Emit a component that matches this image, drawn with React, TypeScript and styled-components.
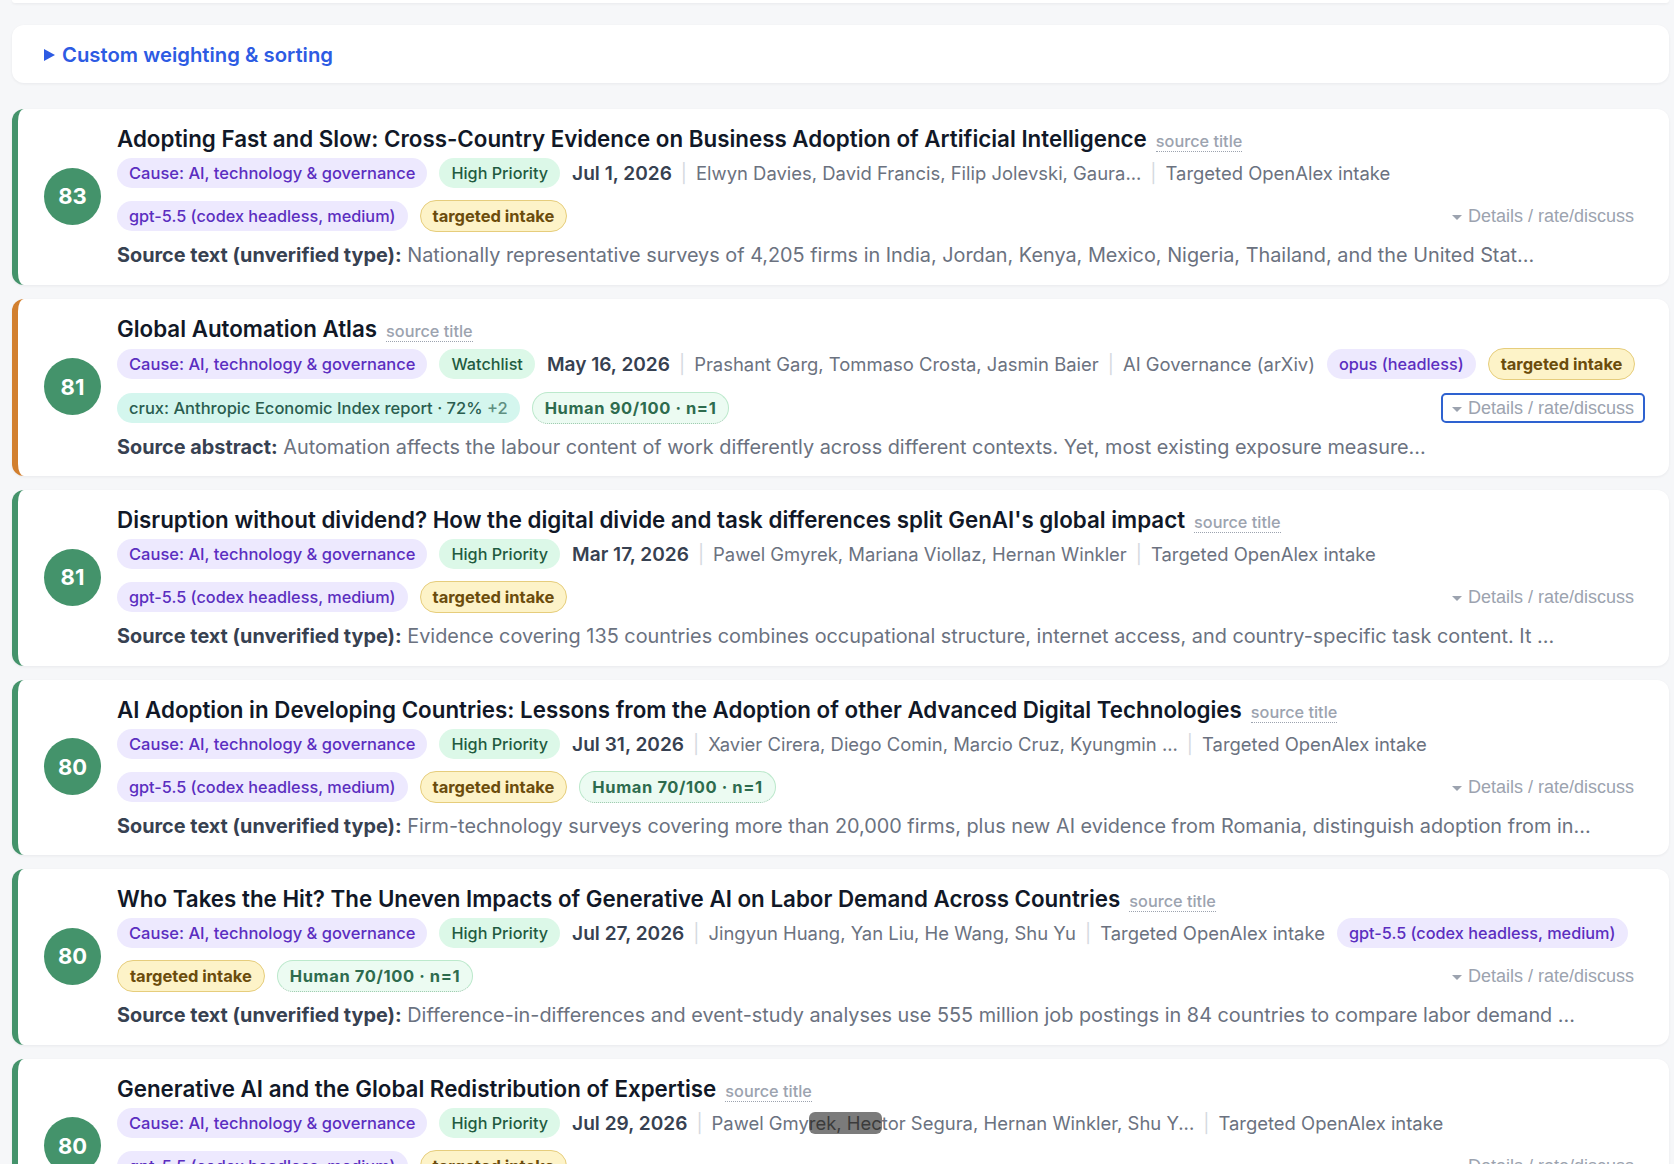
import React from 'react'
import styled, { createGlobalStyle, css } from 'styled-components'

type TagKind = 'cause' | 'priority' | 'model' | 'intake' | 'crux' | 'human'

type Tag = {
  kind: TagKind
  label: string
  extra?: string
}

type Paper = {
  score: number
  accent: string
  title: string
  lead: Tag[]
  date: string
  authors: React.ReactNode
  source: string
  trail: Tag[]
  bodyLabel: string
  body: string
  focused?: boolean
}

const GREEN = '#44936b'
const ORANGE = '#d27f2e'

// the grey cursor smear over one author line in the screenshot
const Smudge = styled.span`
  background: rgba(72, 72, 72, 0.72);
  color: #3b3b3b;
  border-radius: 6px;
`

const cause: Tag = { kind: 'cause', label: 'Cause: AI, technology & governance' }
const highPriority: Tag = { kind: 'priority', label: 'High Priority' }
const gpt: Tag = { kind: 'model', label: 'gpt-5.5 (codex headless, medium)' }
const intake: Tag = { kind: 'intake', label: 'targeted intake' }
const human70: Tag = { kind: 'human', label: 'Human 70/100 · n=1' }

const papers: Paper[] = [
  {
    score: 83,
    accent: GREEN,
    title:
      'Adopting Fast and Slow: Cross-Country Evidence on Business Adoption of Artificial Intelligence',
    lead: [cause, highPriority],
    date: 'Jul 1, 2026',
    authors: 'Elwyn Davies, David Francis, Filip Jolevski, Gaura...',
    source: 'Targeted OpenAlex intake',
    trail: [gpt, intake],
    bodyLabel: 'Source text (unverified type):',
    body: 'Nationally representative surveys of 4,205 firms in India, Jordan, Kenya, Mexico, Nigeria, Thailand, and the United Stat...',
  },
  {
    score: 81,
    accent: ORANGE,
    title: 'Global Automation Atlas',
    lead: [cause, { kind: 'priority', label: 'Watchlist' }],
    date: 'May 16, 2026',
    authors: 'Prashant Garg, Tommaso Crosta, Jasmin Baier',
    source: 'AI Governance (arXiv)',
    trail: [
      { kind: 'model', label: 'opus (headless)' },
      intake,
      { kind: 'crux', label: 'crux: Anthropic Economic Index report · 72%', extra: '+2' },
      { kind: 'human', label: 'Human 90/100 · n=1' },
    ],
    bodyLabel: 'Source abstract:',
    body: 'Automation affects the labour content of work differently across different contexts. Yet, most existing exposure measure...',
    focused: true,
  },
  {
    score: 81,
    accent: GREEN,
    title:
      "Disruption without dividend? How the digital divide and task differences split GenAI's global impact",
    lead: [cause, highPriority],
    date: 'Mar 17, 2026',
    authors: 'Pawel Gmyrek, Mariana Viollaz, Hernan Winkler',
    source: 'Targeted OpenAlex intake',
    trail: [gpt, intake],
    bodyLabel: 'Source text (unverified type):',
    body: 'Evidence covering 135 countries combines occupational structure, internet access, and country-specific task content. It ...',
  },
  {
    score: 80,
    accent: GREEN,
    title:
      'AI Adoption in Developing Countries: Lessons from the Adoption of other Advanced Digital Technologies',
    lead: [cause, highPriority],
    date: 'Jul 31, 2026',
    authors: 'Xavier Cirera, Diego Comin, Marcio Cruz, Kyungmin ...',
    source: 'Targeted OpenAlex intake',
    trail: [gpt, intake, human70],
    bodyLabel: 'Source text (unverified type):',
    body: 'Firm-technology surveys covering more than 20,000 firms, plus new AI evidence from Romania, distinguish adoption from in...',
  },
  {
    score: 80,
    accent: GREEN,
    title:
      'Who Takes the Hit? The Uneven Impacts of Generative AI on Labor Demand Across Countries',
    lead: [cause, highPriority],
    date: 'Jul 27, 2026',
    authors: 'Jingyun Huang, Yan Liu, He Wang, Shu Yu',
    source: 'Targeted OpenAlex intake',
    trail: [gpt, intake, human70],
    bodyLabel: 'Source text (unverified type):',
    body: 'Difference-in-differences and event-study analyses use 555 million job postings in 84 countries to compare labor demand ...',
  },
  {
    score: 80,
    accent: GREEN,
    title: 'Generative AI and the Global Redistribution of Expertise',
    lead: [cause, highPriority],
    date: 'Jul 29, 2026',
    authors: (
      <>
        Pawel Gmy<Smudge>rek, Hec</Smudge>tor Segura, Hernan Winkler, Shu Y...
      </>
    ),
    source: 'Targeted OpenAlex intake',
    trail: [gpt, intake],
    bodyLabel: 'Source text (unverified type):',
    body: 'Large-scale evidence on how generative AI shifts the geography of expert work across countries and occupations...',
  },
]

function TagPill({ tag }: { tag: Tag }) {
  return (
    <Pill $kind={tag.kind}>
      {tag.label}
      {tag.extra ? <PillExtra> {tag.extra}</PillExtra> : null}
    </Pill>
  )
}

function PaperCard({ paper }: { paper: Paper }) {
  return (
    <Card $accent={paper.accent}>
      <Score>{paper.score}</Score>
      <Content>
        <TitleRow>
          <Title>{paper.title}</Title>
          <SourceTitle>source title</SourceTitle>
        </TitleRow>
        <Meta>
          {paper.lead.map((tag, i) => (
            <TagPill key={`l${i}`} tag={tag} />
          ))}
          <DateText>{paper.date}</DateText>
          <Sep>|</Sep>
          <MetaText>{paper.authors}</MetaText>
          <Sep>|</Sep>
          <MetaText>{paper.source}</MetaText>
          {paper.trail.map((tag, i) => (
            <TagPill key={`t${i}`} tag={tag} />
          ))}
          <DetailsToggle $focused={!!paper.focused}>
            <Caret />
            Details / rate/discuss
          </DetailsToggle>
        </Meta>
        <Body>
          <BodyLabel>{paper.bodyLabel}</BodyLabel> {paper.body}
        </Body>
      </Content>
    </Card>
  )
}

export default function App() {
  return (
    <>
      <GlobalStyle />
      <Page>
        <TopEdge />
        <Controls>
          <ControlsCaret />
          <ControlsLabel>Custom weighting &amp; sorting</ControlsLabel>
        </Controls>
        <List>
          {papers.map((p, i) => (
            <PaperCard key={i} paper={p} />
          ))}
        </List>
      </Page>
    </>
  )
}

// Styles

const GlobalStyle = createGlobalStyle`
  html, body {
    margin: 0;
    padding: 0;
    background: #f6f7f9;
    overflow: hidden;
  }
  body {
    font-family: Inter, "Noto Sans", sans-serif;
    -webkit-font-smoothing: antialiased;
  }
  * {
    box-sizing: border-box;
  }
`

const Page = styled.div`
  display: flex;
  flex-direction: column;
  padding: 0 5px 0 12px;
`

const TopEdge = styled.div`
  flex-shrink: 0;
  height: 3px;
  background: #fff;
  border-radius: 0 0 12px 12px;
  box-shadow: 0 1px 3px rgba(15, 23, 42, 0.06);
`

const Controls = styled.div`
  flex-shrink: 0;
  display: flex;
  align-items: center;
  gap: 7px;
  height: 58px;
  margin-top: 22px;
  padding: 0 32px;
  background: #fff;
  border-radius: 12px;
  box-shadow: 0 1px 3px rgba(15, 23, 42, 0.06);
`

const ControlsCaret = styled.span`
  width: 0;
  height: 0;
  border-top: 6px solid transparent;
  border-bottom: 6px solid transparent;
  border-left: 11px solid #2d5be3;
  margin-top: 1px;
`

const ControlsLabel = styled.span`
  font-size: 20.3px;
  font-weight: 600;
  color: #2d5be3;
`

const List = styled.div`
  display: flex;
  flex-direction: column;
  gap: 14px;
  margin-top: 26px;
`

const Card = styled.div<{ $accent: string }>`
  display: flex;
  align-items: center;
  gap: 16px;
  padding: 15px 24px 16.5px 26px;
  background: #fff;
  border-left: 6px solid ${(p) => p.$accent};
  border-radius: 12px;
  box-shadow: 0 1px 3px rgba(15, 23, 42, 0.06);
  flex-shrink: 0;
`

const Score = styled.div`
  display: flex;
  align-items: center;
  justify-content: center;
  flex: 0 0 57px;
  height: 57px;
  border-radius: 50%;
  background: ${GREEN};
  color: #fff;
  font-size: 22px;
  font-weight: 700;
`

const Content = styled.div`
  flex: 1;
  min-width: 0;
  display: flex;
  flex-direction: column;
`

const TitleRow = styled.div`
  display: flex;
  align-items: baseline;
  gap: 9px;
  margin-bottom: 4px;
`

const Title = styled.h2`
  margin: 0;
  font-size: 22.35px;
  line-height: 30px;
  font-weight: 600;
  color: #111827;
  white-space: nowrap;
`

const SourceTitle = styled.span`
  font-size: 16.3px;
  font-weight: 500;
  color: #9ca3af;
  border-bottom: 1px dotted #9ca3af;
  line-height: 20px;
`

const Meta = styled.div`
  display: flex;
  flex-wrap: wrap;
  align-items: center;
  gap: 12px;
`

const pillTones: Record<TagKind, ReturnType<typeof css>> = {
  cause: css`
    background: #ede9fe;
    color: #5b2ec0;
    font-size: 16.5px;
    font-weight: 500;
  `,
  model: css`
    background: #ede9fe;
    color: #5b2ec0;
    font-size: 16.25px;
    font-weight: 500;
  `,
  priority: css`
    background: #dcf8e8;
    color: #1f5b40;
    font-size: 16.2px;
    font-weight: 500;
  `,
  intake: css`
    background: #fdf3c8;
    border: 1px solid #e6cd7c;
    color: #6b4c0c;
    font-size: 16.5px;
    font-weight: 700;
  `,
  crux: css`
    background: #d4f6ee;
    color: #2a5d4f;
    font-size: 16.5px;
    font-weight: 500;
  `,
  human: css`
    background: #ecfbf2;
    border: 1px solid #bce9cc;
    border-bottom: 1px dotted #9cc9ad;
    color: #2e6b4e;
    font-size: 16.5px;
    font-weight: 700;
    letter-spacing: 0.6px;
  `,
}

const Pill = styled.span<{ $kind: TagKind }>`
  display: inline-flex;
  align-items: center;
  padding: 4px 12px;
  border-radius: 999px;
  font-size: 16px;
  line-height: 22px;
  white-space: nowrap;
  ${(p) => pillTones[p.$kind]};
`

const PillExtra = styled.span`
  white-space: pre;
  color: #5f8f81;
`

const DateText = styled.span`
  font-size: 19.1px;
  font-weight: 600;
  color: #374151;
  white-space: nowrap;
`

const MetaText = styled.span`
  font-size: 18.45px;
  color: #6b7280;
  white-space: nowrap;
`

const Sep = styled.span`
  margin: 0 -3px;
  font-size: 18.5px;
  color: #d5d9df;
`

const DetailsToggle = styled.div<{ $focused: boolean }>`
  display: flex;
  align-items: center;
  gap: 6px;
  margin-left: auto;
  padding: 2px 9px;
  border: 2px solid ${(p) => (p.$focused ? '#2e62d0' : 'transparent')};
  border-radius: 5px;
  font-family: 'Liberation Sans', Arial, sans-serif;
  font-size: 18px;
  line-height: 22px;
  color: #9ca3af;
  white-space: nowrap;
`

const Caret = styled.span`
  width: 0;
  height: 0;
  border-left: 5px solid transparent;
  border-right: 5px solid transparent;
  border-top: 5px solid #9ca3af;
  margin-top: 3px;
`

const Body = styled.p`
  margin: 10px 0 0;
  font-size: 19.85px;
  line-height: 26px;
  color: #6b7280;
  white-space: nowrap;
  overflow: hidden;
`

const BodyLabel = styled.b`
  font-weight: 700;
  color: #374151;
`
